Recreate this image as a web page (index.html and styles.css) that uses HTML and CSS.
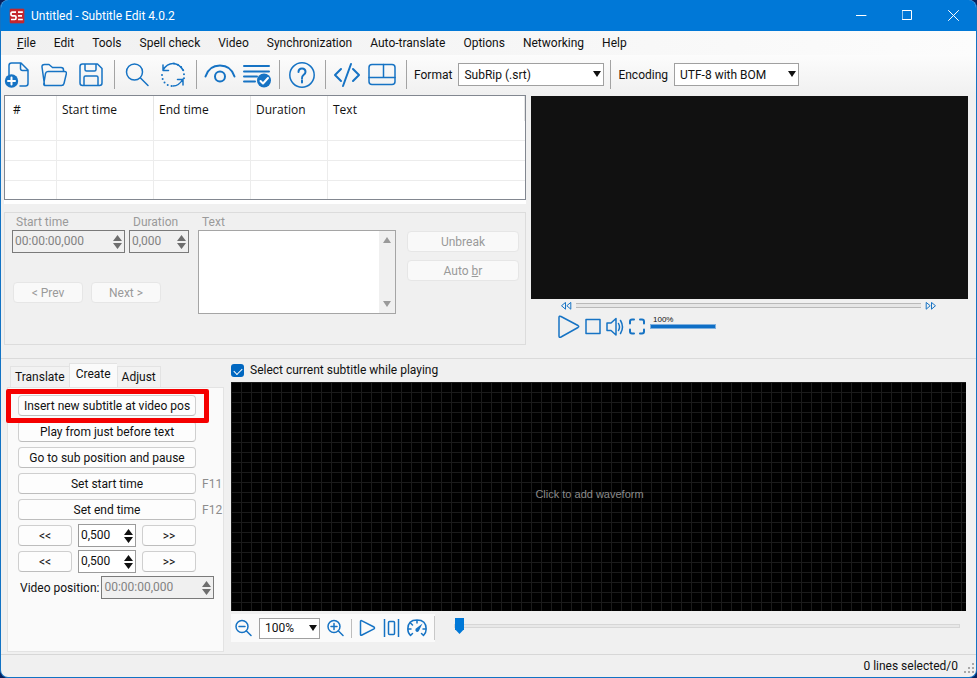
FILE: index.html
```html
<!DOCTYPE html>
<html lang="en">
<head>
<meta charset="utf-8">
<title>Untitled - Subtitle Edit 4.0.2</title>
<link rel="stylesheet" href="styles.css">
</head>
<body>
<div class="window">
  <header class="titlebar">
    <svg class="logo" viewBox="0 0 16 16" aria-hidden="true"><rect width="16" height="16" rx="2" fill="#c4262e"/><path d="M7 4.2H3.2Q2 4.2 2 5.500V6.500Q2 7.800 3.200 7.800H5.800Q7 7.800 7 9V10Q7 11.500 5.800 11.500H2M9 4.200H13.800M9 7.800H13M9 11.500H13.800" fill="none" stroke="#fff" stroke-width="1.700"/></svg>
    <h1 class="title">Untitled - Subtitle Edit 4.0.2</h1>
    <button class="caption" aria-label="Minimize"><svg viewBox="0 0 11 11"><path d="M0 5.5h10"/></svg></button>
    <button class="caption" aria-label="Maximize"><svg viewBox="0 0 11 11"><rect x=".5" y=".5" width="9" height="9"/></svg></button>
    <button class="caption" aria-label="Close"><svg viewBox="0 0 11 11"><path d="M.5.5l10 10M10.500.5l-10 10"/></svg></button>
  </header>

  <nav class="menu">
    <button><u>F</u>ile</button><button>Edit</button><button>Tools</button><button>Spell check</button><button>Video</button><button>Synchronization</button><button>Auto-translate</button><button>Options</button><button>Networking</button><button>Help</button>
  </nav>

  <div class="toolbar">
    <div class="group">
      <button class="icon" aria-label="New"><svg viewBox="0 0 26 26"><path d="M5 13V3.500Q5 1 7.500 1H17l7 7V21.500Q24 24 21.500 24H16M16.500 1V6.500Q16.500 8.500 18.500 8.500H24"/><circle class="solid" cx="7.500" cy="19" r="6.700"/><path class="light" d="M7.500 15.500v7M4 19h7"/></svg></button>
      <button class="icon" aria-label="Open"><svg viewBox="0 0 26 26"><path d="M3.500 23 1 5Q.8 2.500 3.500 2.500H8L11.500 5.500H20Q22.500 5.500 22.500 8V9.500M3.500 23.500Q2.500 23.500 3 20.500L4.500 11.500Q5 9.500 7 9.500H23.500Q26 9.500 25.300 12L23 21.500Q22.500 23.500 20.500 23.500Z"/></svg></button>
      <button class="icon" aria-label="Save"><svg viewBox="0 0 26 26"><path d="M4.500 2H19.500L24 6.500V21Q24 23.500 21.500 23.500H4.500Q2 23.500 2 21V4.500Q2 2 4.500 2ZM7 2V7.500Q7 9 8.500 9H16.500Q18 9 18 7.500V2M6 23.500V15.500Q6 14 7.500 14H18.500Q20 14 20 15.500V23.500"/></svg></button>
    </div>
    <span class="sep"></span>
    <div class="group near">
      <button class="icon" aria-label="Find"><svg viewBox="0 0 26 26"><circle cx="10.500" cy="10" r="8"/><path d="M16.500 16 24 23.500"/></svg></button>
      <button class="icon" aria-label="Replace"><svg viewBox="0 0 26 26"><path d="M3 8Q7 1.500 13 1.500T23 8M3 3V8.500H8.500M23 17Q19 24 13 24M23 23V17.500H17.500"/><path class="dots" d="M2 13Q2.500 23 12 24M14 1.500Q24 3.500 24 13V17"/></svg></button>
    </div>
    <span class="sep"></span>
    <div class="group tight">
      <button class="icon wide" aria-label="Visual sync"><svg viewBox="0 0 32 26"><path class="bold" d="M1.500 14.500Q5 3.500 16 3.500T30.500 14.500"/><circle class="bold" cx="16" cy="14.500" r="5"/></svg></button>
      <button class="icon lines" aria-label="Fix common errors"><svg viewBox="0 0 30 26"><path class="bold" d="M1 4H26M1 9.500H26M1 14.500H14M1 19.500H12"/><circle class="solid" cx="21" cy="18.500" r="7"/><path class="light" d="M17.500 19l2.500 2.500 5-5.500"/></svg></button>
    </div>
    <span class="sep close"></span>
    <button class="icon" aria-label="Help"><svg viewBox="0 0 26 26"><circle cx="13" cy="13" r="12.200"/><path class="bold" d="M9.500 10Q9.500 6.500 13 6.500T16.500 10Q16.500 11.500 14.500 13T13 16.500M13 18.500V20.500"/></svg></button>
    <span class="sep"></span>
    <div class="group tight">
      <button class="icon code" aria-label="Source view"><svg viewBox="0 0 28 26"><path class="bold" d="M8 7 2 13 8 19M20 7l6 6-6 6M18 2 10 24"/></svg></button>
      <button class="icon code" aria-label="Layout"><svg viewBox="0 0 28 26"><rect x="1" y="2.500" width="26" height="20" rx="3"/><path d="M1 15.500H27M15.500 2.500V15.500"/></svg></button>
    </div>
    <span class="sep"></span>
    <label for="format">Format</label>
    <span class="combo format"><select id="format"><option>SubRip (.srt)</option></select></span>
    <span class="sep close"></span>
    <label for="encoding">Encoding</label>
    <span class="combo encoding"><select id="encoding"><option>UTF-8 with BOM</option></select></span>
  </div>

  <main class="upper">
    <section class="edit">
      <div class="list">
        <table>
          <colgroup><col class="c-num"><col class="c-time"><col class="c-time"><col class="c-dur"><col></colgroup>
          <thead><tr><th>#</th><th>Start time</th><th>End time</th><th>Duration</th><th>Text</th></tr></thead>
          <tbody>
            <tr><td></td><td></td><td></td><td></td><td></td></tr>
            <tr><td></td><td></td><td></td><td></td><td></td></tr>
            <tr><td></td><td></td><td></td><td></td><td></td></tr>
            <tr><td></td><td></td><td></td><td></td><td></td></tr>
          </tbody>
        </table>
      </div>
      <div class="editor">
        <div class="timing">
          <div class="fields">
            <div class="field start"><label for="start">Start time</label>
              <span class="spin off"><input id="start" value="00:00:00,000" disabled><svg viewBox="0 0 9 14"><path d="M0 6 4.500 0 9 6ZM0 8H9L4.500 14Z"/></svg></span></div>
            <div class="field dur"><label for="dur">Duration</label>
              <span class="spin off"><input id="dur" value="0,000" disabled><svg viewBox="0 0 9 14"><path d="M0 6 4.500 0 9 6ZM0 8H9L4.500 14Z"/></svg></span></div>
          </div>
          <div class="steps"><button class="btn" disabled>&lt; Prev</button><button class="btn" disabled>Next &gt;</button></div>
        </div>
        <div class="field text"><label for="text">Text</label>
          <div class="box"><textarea id="text" disabled></textarea><div class="scroll"><i class="up"></i><i class="down"></i></div></div></div>
        <div class="breaks"><button class="btn" disabled>Unbreak</button><button class="btn" disabled>Auto <u>b</u>r</button></div>
      </div>
    </section>

    <section class="player">
      <div class="video"></div>
      <div class="seek">
        <button aria-label="Rewind"><svg viewBox="0 0 11 8"><path d="M4.500.8V7.200L.8 4ZM9.800.8V7.200L6.100 4Z"/></svg></button>
        <div class="track"></div>
        <button aria-label="Forward"><svg viewBox="0 0 11 8"><path d="M1.200.8V7.200L4.900 4ZM6.500.8V7.200L10.200 4Z"/></svg></button>
      </div>
      <div class="controls">
        <button aria-label="Play"><svg width="22" height="24" viewBox="0 0 22 24"><path d="M1 2.500Q1 .5 3 1.500L20 10.500Q21.500 11.500 20 12.500L3 22Q1 23 1 21Z"/></svg></button>
        <button aria-label="Stop"><svg width="16" height="24" viewBox="0 0 16 24"><rect x="1" y="4.500" width="14" height="14"/></svg></button>
        <button aria-label="Mute"><svg width="18" height="24" viewBox="0 0 18 24"><path d="M1 8H5L10 3.500V20L5 15.500H1ZM12.500 8.500Q14.500 12 12.500 15.500M14.500 5.500Q18.500 12 14.500 18.500"/></svg></button>
        <button aria-label="Full screen"><svg width="16" height="24" viewBox="0 0 16 24"><path class="bold" d="M1 8.500V6.500Q1 4.500 3 4.500H5M11 4.500H13Q15 4.500 15 6.500V8.500M15 14.500V16.500Q15 18.500 13 18.500H11M5 18.500H3Q1 18.500 1 16.500V14.500"/></svg></button>
        <div class="volume"><span>100%</span><div class="level"></div></div>
      </div>
    </section>
  </main>

  <main class="lower">
    <section class="side">
      <div class="tabs"><button>Translate</button><button class="on">Create</button><button>Adjust</button></div>
      <div class="pane">
        <div class="row marked"><button class="btn">Insert new subtitle at video pos</button></div>
        <div class="row"><button class="btn">Play from just before text</button></div>
        <div class="row"><button class="btn">Go to sub position and pause</button></div>
        <div class="row"><button class="btn">Set start time</button><kbd>F11</kbd></div>
        <div class="row"><button class="btn">Set end time</button><kbd>F12</kbd></div>
        <div class="row nudge"><button class="btn">&lt;&lt;</button><span class="spin"><input value="0,500" aria-label="Small step"><svg viewBox="0 0 9 14"><path d="M0 6 4.500 0 9 6ZM0 8H9L4.500 14Z"/></svg></span><button class="btn">&gt;&gt;</button></div>
        <div class="row nudge"><button class="btn">&lt;&lt;</button><span class="spin"><input value="0,500" aria-label="Large step"><svg viewBox="0 0 9 14"><path d="M0 6 4.500 0 9 6ZM0 8H9L4.500 14Z"/></svg></span><button class="btn">&gt;&gt;</button></div>
        <div class="row position"><label for="pos">Video position:</label><span class="spin off"><input id="pos" value="00:00:00,000" disabled><svg viewBox="0 0 9 14"><path d="M0 6 4.500 0 9 6ZM0 8H9L4.500 14Z"/></svg></span></div>
      </div>
    </section>
    <section class="wave">
      <label class="check"><input type="checkbox" checked><span>Select current subtitle while playing</span></label>
      <div class="waveform">Click to add waveform</div>
      <div class="wavebar">
        <div class="zoombar">
          <button aria-label="Zoom out"><svg width="17" height="18" viewBox="0 0 17 18"><circle cx="7" cy="7.500" r="6"/><path d="M11.500 12 16 16.500M4 7.500h6"/></svg></button>
          <span class="combo zoom"><select aria-label="Zoom"><option>100%</option></select></span>
          <button aria-label="Zoom in"><svg width="17" height="18" viewBox="0 0 17 18"><circle cx="7" cy="7.500" r="6"/><path d="M11.500 12 16 16.500M4 7.500h6M7 4.500v6"/></svg></button>
          <span class="thin"></span>
          <button aria-label="Play"><svg width="17" height="18" viewBox="0 0 17 18"><path d="M1.500 2.500Q1.500 1 3 1.800L15 8Q16 9 15 9.800L3 16Q1.500 16.800 1.500 15.500Z"/></svg></button>
          <button aria-label="Center"><svg width="17" height="18" viewBox="0 0 17 18"><path d="M1.500 0V18M15.500 0V18"/><rect x="5.500" y="2.500" width="6" height="13" rx="1"/></svg></button>
          <button aria-label="Speed"><svg width="20" height="18" viewBox="0 0 20 18"><path d="M3.500 16.500Q.8 14 .8 10 .8 1 10 1T19.200 10Q19.200 14 16.500 16.500M10 1V4M3.500 4 5.500 6M1 10H4M16 10H19M3.500 16.500 5.500 14.500M16.500 16.500 14.500 14.500"/><path class="solid" d="M15.500 4.500 11.800 12Q10.500 13.500 9 12.500 7.500 11 9 9.500Z"/></svg></button>
          <span class="end"></span>
        </div>
        <input class="slider" type="range" min="0" max="100" value="0" aria-label="Position">
      </div>
    </section>
  </main>

  <footer class="status"><span>0 lines selected/0</span><svg width="12" height="12" viewBox="0 0 12 12" aria-hidden="true"><path d="M8 0h2v2H8zM4 4h2v2H4zM8 4h2v2H8zM0 8h2v2H0zM4 8h2v2H4zM8 8h2v2H8z"/></svg></footer>
</div>
</body>
</html>
```
FILE: styles.css
```css
*, *::after { box-sizing: border-box; }
body {
  margin: 0;
  background: #07205c;
  color: #111;
  font: 12px/16px Roboto, "Noto Sans", sans-serif;
}
button, input, select, textarea { font: inherit; color: inherit; margin: 0; }
button { border: 0; padding: 0; background: none; white-space: nowrap; }
svg { display: block; fill: none; stroke: #1673c4; stroke-width: 1.500; stroke-linecap: round; stroke-linejoin: round; }
svg .bold { stroke-width: 2; }
svg .solid { fill: #1673c4; stroke: none; }
svg .light { stroke: #fff; stroke-width: 2; }
svg .dots { stroke-width: 2; stroke-dasharray: 0 4; }

.window {
  display: flex;
  flex-direction: column;
  height: 100vh;
  border: 1px solid #1273c4;
  border-top: 0;
  border-radius: 8px;
  overflow: hidden;
  background: #f0f0f0;
}

.titlebar { display: flex; align-items: center; flex: none; height: 31px; padding-left: 8px; background: #0078d7; color: #fff; }
.logo { width: 16px; height: 16px; stroke-linecap: butt; stroke-linejoin: miter; }
.title { flex: 1; margin: 0 0 0 6px; font-size: 12px; font-weight: 400; }
.caption { display: grid; place-items: center; width: 46px; height: 30px; }
.caption svg { width: 11px; height: 11px; stroke: #fff; stroke-width: 1; }

.menu { display: flex; gap: 18px; flex: none; height: 24px; padding-left: 16px; background: linear-gradient(90deg, #f0f0f0, #fcfcfc); }

.toolbar { display: flex; align-items: center; flex: none; height: 40px; padding: 0 0 1px 3px; background: linear-gradient(#fcfcfc, #f0f0f0); }
.group { display: flex; gap: 11px; }
.group.near { gap: 10px; }
.group.tight { gap: 7px; }
.icon { width: 26px; height: 26px; }
.icon svg { width: 100%; height: 100%; }
.icon.wide { width: 32px; }
.icon.lines { width: 30px; }
.icon.code { width: 28px; }
.sep { width: 1px; height: 29px; margin: 0 9px 0 10px; background: #a3a3a3; }
.sep.close { margin-left: 6px; }
.sep:has(+ label), .sep:has(+ .tight) { margin-right: 7px; }
.combo { position: relative; height: 23px; }
.combo select { appearance: none; width: 100%; height: 100%; padding: 0 18px 0 5px; border: 1px solid #a0a0a0; border-radius: 0; background: #fff; }
.combo::after { content: ""; position: absolute; right: 3px; top: 8px; border: 4px solid transparent; border-top: 6px solid #111; border-bottom: 0; pointer-events: none; }
.toolbar .combo { margin-left: 6px; }
.format { width: 146px; }
.encoding { width: 125px; }

.upper { display: grid; grid-template-columns: 522fr 437fr; gap: 5px; flex: none; padding: 0 8px 13px 3px; border-bottom: 1px solid #dadada; }
.edit, .player { min-width: 0; }
.list { padding-bottom: 4px; margin-bottom: 8px; background: #fff; }
table { width: 100%; table-layout: fixed; border: 1px solid #828790; border-spacing: 0; background: #fff; font-family: "Open Sans", sans-serif; }
.c-num { width: 52px; }
.c-time { width: 97px; }
.c-dur { width: 77px; }
th { height: 25px; padding: 2px 5px 0; border-right: 1px solid #e5e5e5; font-weight: 400; text-align: left; }
th:first-child { padding-left: 8px; }
td { height: 20px; padding: 0; border-right: 1px solid #ececec; border-bottom: 1px solid #ececec; }
td:last-child { border-right: 0; }
tr:last-child td { height: 18px; border-bottom: 0; }

.editor { display: flex; gap: 9px; height: 133px; padding: 2px 6px 0 7px; border: 1px solid #dcdcdc; color: #9a9a9a; }
.timing { width: 177px; }
.fields { display: flex; gap: 4px; }
.field label { display: block; padding-left: 4px; line-height: 15px; }
.start { width: 113px; }
.dur { width: 60px; }
.steps { display: flex; gap: 8px; padding: 29px 0 0 1px; }
.steps .btn { width: 70px; }
.text { flex: 1; }
.box { display: flex; height: 84px; border: 1px solid #a5a5a5; background: #fff; }
.box textarea { flex: 1; min-width: 0; border: 0; resize: none; background: #fff; }
.scroll { display: flex; flex-direction: column; justify-content: space-between; align-items: center; width: 16px; padding: 6px 0; background: #f0f0f0; }
.scroll i { border: 4px solid transparent; }
.scroll .up { border-top: 0; border-bottom: 6px solid #9a9a9a; }
.scroll .down { border-bottom: 0; border-top: 6px solid #9a9a9a; }
.breaks { display: flex; flex-direction: column; gap: 8px; width: 114px; padding: 16px 0 0 2px; }

.btn { height: 21px; border: 1px solid #cfcfcf; border-bottom-color: #bdbdbd; border-radius: 4px; background: #fdfdfd; line-height: 18px; text-align: center; }
.btn:disabled { border-color: #e6e6e6; background: #f9f9f9; color: #9a9a9a; }
.spin { display: flex; align-items: center; height: 23px; padding-right: 2px; border: 1px solid #9b9b9b; background: #fff; }
.spin input { flex: 1; min-width: 0; width: 0; height: 19px; padding: 0 2px 2px; border: 0; background: none; }
.spin svg { width: 9px; height: 14px; fill: #111; stroke: none; }
.spin.off { border-color: #7a7a7a; background: #f0f0f0; color: #828282; }
.spin.off svg { fill: #6e6e6e; }

.player { padding-top: 1px; }
.video { height: 203px; background: #111; }
.seek { display: flex; align-items: center; gap: 4px; height: 13px; padding: 0 32px 0 30px; }
.seek svg { width: 11px; height: 8px; stroke-width: 1; }
.track { flex: 1; height: 5px; border: 1px solid #b9b9b9; border-inline: 0; background: #e6e6e6; }
.controls { display: flex; gap: 5px; padding: 3px 0 0 27px; }
.volume { width: 66px; font: 8px/9px "Liberation Sans", sans-serif; }
.volume span { padding-left: 3px; }
.level { height: 5px; border: 1px solid #7fb0de; background: #0f6fc6; }

.lower { display: flex; flex: 1; min-height: 0; padding: 4px 10px 2px 6px; gap: 7px; }
.side { display: flex; flex-direction: column; width: 217px; flex: none; }
.tabs { display: flex; align-items: flex-end; height: 24px; padding: 0 0 0 3px; }
.tabs button { height: 21px; padding: 0 4px; border: 1px solid #e3e3e3; border-width: 1px 0 0 1px; background: #f2f2f2; }
.tabs button:last-child { border-right-width: 1px; }
.tabs .on { height: 24px; padding: 0 6px 3px; background: #fafafa; }
.pane { display: flex; flex-direction: column; gap: 5px; flex: 1; padding: 7px 2px 0 10px; border: 1px solid #e3e3e3; background: #fafafa; }
.row { display: flex; align-items: center; position: relative; height: 21px; gap: 6px; }
.row > .btn { width: 178px; flex: none; }
.row kbd { font: inherit; color: #8c8c8c; }
.marked::after { content: ""; position: absolute; inset: -6px auto -7px -12px; width: 203px; border: 5px solid #f50000; border-radius: 2px; pointer-events: none; z-index: 1; }
.row.nudge > .btn { width: 54px; }
.nudge .spin { width: 58px; flex: none; }
.position { gap: 2px; padding-left: 2px; white-space: nowrap; }
.position .spin { width: 113px; flex: none; }

.wave { display: flex; flex-direction: column; flex: 1; min-width: 0; }
.check { display: flex; align-items: center; gap: 6px; height: 19px; padding-bottom: 5px; }
.check input { appearance: none; width: 13px; height: 13px; border-radius: 3px; background: #0067c0; display: grid; place-items: center; }
.check input:checked::after { content: ""; width: 8px; height: 5px; border: solid #fff; border-width: 0 0 1px 1px; rotate: -45deg; }
.waveform {
  display: grid;
  place-items: center;
  flex: 1;
  padding: 0 18px 6px 0;
  background: linear-gradient(#1b1b1b 1px, transparent 1px) 0 0 / 10px 10px, linear-gradient(90deg, #1b1b1b 1px, transparent 1px) 0 0 / 10px 10px, #000;
  color: #8a8a8a;
  font: 11px/16px "Liberation Sans", sans-serif;
}
.wavebar { display: flex; gap: 19px; flex: none; height: 41px; padding: 3px 6px 0 0; }
.zoombar { display: flex; align-items: center; gap: 7px; height: 28px; padding-left: 4px; background: #fafafa; }
.combo.zoom { width: 61px; height: 21px; }
.zoom::after { top: 7px; }
.thin { width: 1px; height: 19px; background: #bdbdbd; }
.end { width: 1px; height: 24px; background: #c8c8c8; }
.slider { appearance: none; flex: 1; min-width: 0; height: 24px; margin: 0; background: none; }
.slider::-webkit-slider-runnable-track { height: 4px; border: 1px solid #d6d6d6; background: #e8e8e8; }
.slider::-webkit-slider-thumb { appearance: none; width: 9px; height: 16px; margin-top: -7px; background: #0078d7; clip-path: polygon(0 0, 100% 0, 100% 70%, 50% 100%, 0 70%); }

.status { display: flex; justify-content: flex-end; align-items: center; gap: 6px; flex: none; height: 23px; padding-right: 0; border-top: 1px solid #d7d7d7; }
.status svg { align-self: flex-end; margin-bottom: 2px; fill: #a8a8a8; stroke: none; }
```
